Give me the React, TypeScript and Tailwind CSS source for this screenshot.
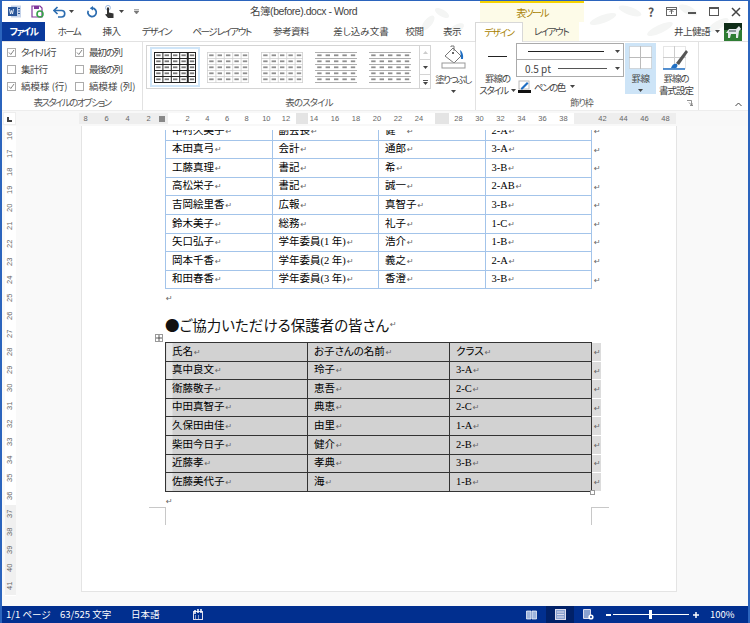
import React from "react";

const sans = "font-['Noto_Sans_CJK_JP','Liberation_Sans',sans-serif] [font-feature-settings:'palt']";

const topRows = [
  ["中村久美子", "副会長", "健一", "2-A"],
  ["本田真弓", "会計", "通郎", "3-A"],
  ["工藤真理", "書記", "希", "3-B"],
  ["高松栄子", "書記", "誠一", "2-AB"],
  ["吉岡絵里香", "広報", "真智子", "3-B"],
  ["鈴木美子", "総務", "礼子", "1-C"],
  ["矢口弘子", "学年委員(1 年)", "浩介", "1-B"],
  ["岡本千香", "学年委員(2 年)", "義之", "2-A"],
  ["和田春香", "学年委員(3 年)", "香澄", "3-B"],
];

const bottomRows = [
  ["氏名", "お子さんの名前", "クラス"],
  ["真中良文", "玲子", "3-A"],
  ["衛藤敬子", "恵吾", "2-C"],
  ["中田真智子", "典恵", "2-C"],
  ["久保田由佳", "由里", "1-A"],
  ["柴田今日子", "健介", "2-B"],
  ["近藤孝", "孝典", "3-B"],
  ["佐藤美代子", "海", "1-B"],
];

const leftNums = ["8", "6", "4", "2"];
const midA = ["2", "4", "6", "8", "10", "12"];
const midB = ["14", "16", "18", "20", "22", "24"];
const midC = ["28", "30", "32", "34", "36", "38"];
const rightNums = ["42", "44", "46", "48"];
const vNums = Array.from({ length: 26 }, (_, i) => 16 + i);

const Ret = () => <span className="font-['DejaVu_Sans',sans-serif] text-[8px] text-[#666] ml-[1px] leading-none">↵</span>;
const Caret = ({ className = "" }: { className?: string }) => (
  <svg width="5" height="3" viewBox="0 0 5 3" className={className}><path d="M0 0h5L2.5 3z" fill="#444" /></svg>
);

const Check = ({ label, on, track }: { label: string; on?: boolean; track: string }) => (
  <div className="flex items-center h-[17px] text-[9.5px] text-[#444] whitespace-nowrap">
    <div className="w-[9px] h-[9px] border border-[#ababab] bg-white mr-[5px] flex items-center justify-center shrink-0">
      {on && <svg width="7" height="7" viewBox="0 0 7 7"><path d="M1 3.5l1.8 2L6 1" fill="none" stroke="#777" strokeWidth="0.9" /></svg>}
    </div>
    <span className={track}>{label}</span>
  </div>
);

const Thumb = ({ kind }: { kind: "dark" | "light" | "lines" }) => {
  const line = kind === "dark" ? "#222" : kind === "light" ? "#cfcfcf" : "#9a9a9a";
  const xs = [0, 8.4, 16.8, 25.2, 33.6, 42];
  const ys = [0, 6, 12, 18, 24, 30];
  return (
    <svg width="42" height="31" viewBox="0 0 42 31" className="shrink-0">
      {ys.map((y) => <line key={y} x1="0" x2="42" y1={y + 0.5} y2={y + 0.5} stroke={line} strokeWidth={kind === "dark" ? 1 : 0.8} />)}
      {kind !== "lines" && xs.map((x) => <line key={x} x1={x + (x === 42 ? -0.5 : 0.5)} x2={x + (x === 42 ? -0.5 : 0.5)} y1="0" y2="31" stroke={line} strokeWidth={kind === "dark" ? 1 : 0.8} />)}
      {ys.slice(0, 5).map((y) => xs.slice(0, 5).map((x) => (
        <rect key={`${x}-${y}`} x={x + 2.2} y={y + 2.4} width="4.4" height="1.8" fill={kind === "dark" ? "#777" : "#8f8f8f"} />
      )))}
      {kind === "dark" && <line x1="33.6" x2="33.6" y1="0" y2="31" stroke="#222" strokeWidth="1.6" />}
    </svg>
  );
};

const Leaves = () => (
  <svg width="350" height="41" viewBox="0 0 350 41" className="absolute right-0 top-0 pointer-events-none">
    <g fill="#f4f5f4">
      <ellipse cx="30" cy="22" rx="9" ry="4" transform="rotate(-50 30 22)" />
      <ellipse cx="44" cy="12" rx="8" ry="3.5" transform="rotate(30 44 12)" />
      <ellipse cx="58" cy="28" rx="9" ry="4" transform="rotate(-30 58 28)" />
      <ellipse cx="205" cy="18" rx="14" ry="4" transform="rotate(-20 205 18)" />
      <ellipse cx="232" cy="10" rx="12" ry="4" transform="rotate(20 232 10)" />
      <ellipse cx="262" cy="28" rx="14" ry="4" transform="rotate(-25 262 28)" />
      <ellipse cx="290" cy="9" rx="10" ry="4" transform="rotate(25 290 9)" />
      <ellipse cx="320" cy="24" rx="12" ry="4" transform="rotate(-30 320 24)" />
    </g>
  </svg>
);

const App: React.FC = () => {
  return (
    <div className={`w-[750px] h-[623px] overflow-hidden flex flex-col bg-white border-x-2 border-t border-[#2b64bd] relative ${sans}`}>
      {/* title bar */}
      <div className="h-[21px] flex items-center relative shrink-0">
        <Leaves />
        <svg width="13" height="13" viewBox="0 0 13 13" className="ml-[6px]">
          <rect x="3" y="0.5" width="10" height="12" fill="#c5d3ea" />
          <rect x="0" y="2" width="9" height="9" fill="#2b579a" />
          <path d="M1.5 4l1 5 1-3.5 1 3.5 1-5" fill="none" stroke="#fff" strokeWidth="0.8" />
          <path d="M10 3.5h2M10 6h2M10 8.5h2" stroke="#2b579a" />
        </svg>
        <svg width="13" height="13" viewBox="0 0 13 13" className="ml-[10px]">
          <path d="M1 1h8l2 2v9H1z" fill="#fff" stroke="#80379b" strokeWidth="1.2" />
          <rect x="3" y="1" width="5" height="3" fill="#80379b" />
          <circle cx="9" cy="9" r="3" fill="none" stroke="#37a24a" strokeWidth="1.6" />
        </svg>
        <svg width="13" height="12" viewBox="0 0 13 12" className="ml-[9px]">
          <path d="M1.5 4.5h7a3.2 3.2 0 010 6.5H5" fill="none" stroke="#2b6cb0" strokeWidth="1.6" />
          <path d="M4.5 1L1 4.5 4.5 8" fill="none" stroke="#2b6cb0" strokeWidth="1.6" />
        </svg>
        <Caret className="ml-[3px]" />
        <svg width="12" height="12" viewBox="0 0 12 12" className="ml-[12px]">
          <path d="M6.5 2.2a4.2 4.2 0 11-4.3 2.6" fill="none" stroke="#2b6cb0" strokeWidth="1.7" />
          <path d="M7 0v4.5L3.8 2.2z" fill="#2b6cb0" />
        </svg>
        <svg width="11" height="14" viewBox="0 0 11 14" className="ml-[6px]">
          <circle cx="4" cy="2.8" r="2.4" fill="none" stroke="#9db8dd" />
          <path d="M3 2.5h2v5l4.5 1v4.5H4L1 9.5l2-.5z" fill="#333" />
        </svg>
        <Caret className="ml-[4px]" />
        <svg width="5" height="5" viewBox="0 0 5 5" className="ml-[10px]"><path d="M0 0.5h5M0 2l2.5 3L5 2z" stroke="#777" fill="#777" strokeWidth="0.6" /></svg>
        <div className="ml-[111px] w-[108px] text-[10.5px] tracking-[-0.45px] text-[#444] whitespace-nowrap font-['Liberation_Sans','Noto_Sans_CJK_JP',sans-serif] shrink-0">名簿(before).docx - Word</div>
        <div className="ml-[122px] w-[104px] h-[22px] -mt-[1px] bg-[#fdfbe8] border-t-[3px] border-[#f6d300] text-[10px] tracking-[-1.7px] text-[#a87f00] flex items-center justify-center relative shrink-0">表ツール</div>
        <div className="ml-[64px] text-[12px] font-bold text-[#555] relative">?</div>
        <svg width="11" height="9" viewBox="0 0 11 9" className="ml-[12px] relative"><rect x="0.5" y="0.5" width="10" height="8" fill="none" stroke="#666" /><path d="M5.5 7V3M3.5 5l2-2 2 2M0 2.5h11" stroke="#666" fill="none" /></svg>
        <div className="ml-[11px] w-[8px] h-[2px] bg-[#555] mt-[3px] relative" />
        <div className="ml-[13px] w-[10px] h-[9px] border border-[#555] border-t-2 relative" />
        <svg width="10" height="10" viewBox="0 0 10 10" className="ml-[12px] relative"><path d="M1 1l8 8M9 1l-8 8" stroke="#444" strokeWidth="1.5" /></svg>
      </div>
      {/* tabs */}
      <div className="h-[19px] flex items-center text-[9.5px] text-[#444] whitespace-nowrap shrink-0 relative">
        <div className="w-[43px] h-[19px] bg-[#0a3a9c] text-white flex items-center justify-center font-bold tracking-[-1.5px]">ファイル</div>
        <div className="w-[48px] text-center relative tracking-[-1.6px]">ホーム</div>
        <div className="w-[37px] text-center relative tracking-[-0.5px]">挿入</div>
        <div className="w-[53px] text-center relative tracking-[-1.4px]">デザイン</div>
        <div className="w-[77px] text-center relative tracking-[-1.5px]">ページ レイアウト</div>
        <div className="w-[62px] text-center relative tracking-[-0.5px]">参考資料</div>
        <div className="w-[78px] text-center relative">差し込み文書</div>
        <div className="w-[29px] text-center relative tracking-[-0.5px]">校閲</div>
        <div className="w-[46px] text-center relative tracking-[-0.5px]">表示</div>
        <div className="w-[48px] h-[20px] mt-[1px] bg-white border border-b-0 border-[#d8d8d8] text-[#a87f00] flex items-center justify-center relative z-10 tracking-[-1.4px]">デザイン</div>
        <div className="w-[56px] h-[19px] bg-[#fdfbe8] flex items-center justify-center relative tracking-[-1.4px]">レイアウト</div>
        <div className="ml-[95px] w-[36px] text-center relative tracking-[-0.5px]">井上健語</div>
        <Caret className="ml-[5px] relative" />
        <svg width="18" height="18" viewBox="0 0 18 18" className="ml-[4px] relative">
          <rect width="18" height="18" fill="#2f7d34" />
          <rect width="18" height="7" fill="#0f2d18" />
          <path d="M2 10l3-4h7l3-3 2 3-2 2-1 7h-2v-4H7l-1 4H4v-5z" fill="#e4e9ec" />
          <path d="M5 7h7v2H5z" fill="#8d979c" />
        </svg>
      </div>
      {/* ribbon */}
      <div className="h-[69px] flex border-t border-[#e2e2e2] border-b-0 shrink-0 text-[#444]">
        <div className="w-[141px] border-r border-[#e2e2e2] flex flex-col justify-between pl-[5px] pt-[2px] pb-[1px]">
          <div className="grid grid-cols-[68px_68px]">
            <Check label="タイトル行" on track="tracking-[-1.7px]" />
            <Check label="最初の列" on track="tracking-[-1.2px]" />
            <Check label="集計行" track="tracking-[-0.8px]" />
            <Check label="最後の列" track="tracking-[-1.2px]" />
            <Check label="縞模様 (行)" on track="tracking-[0px]" />
            <Check label="縞模様 (列)" track="tracking-[0px]" />
          </div>
          <div className="text-center text-[9.5px] tracking-[-1.6px] text-[#555] pr-[5px]">表スタイルのオプション</div>
        </div>
        <div className="w-[333px] border-r border-[#e2e2e2] flex flex-col justify-between pb-[1px]">
          <div className="flex pt-[3px]">
            <div className="ml-[3px] w-[285px] h-[44px] border border-[#d4d4d4] flex items-center overflow-hidden">
              <div className="ml-[3px] w-[50px] h-[40px] border-2 border-[#cfe5f8] flex items-center justify-center shrink-0"><Thumb kind="dark" /></div>
              <div className="ml-[7px] flex gap-[12px] shrink-0">
                <Thumb kind="light" />
                <Thumb kind="light" />
                <Thumb kind="lines" />
                <Thumb kind="lines" />
              </div>
              <div className="ml-auto w-[11px] h-[44px] border-l border-[#d4d4d4] flex flex-col text-[#999] shrink-0 bg-white">
                <div className="flex-1 flex items-center justify-center"><svg width="5" height="3" viewBox="0 0 5 3"><path d="M0 3h5L2.5 0z" fill="#ccc" /></svg></div>
                <div className="flex-1 flex items-center justify-center border-y border-[#d4d4d4]"><Caret /></div>
                <div className="flex-1 flex flex-col items-center justify-center gap-[1px]"><div className="w-[5px] h-[1px] bg-[#555]" /><Caret /></div>
              </div>
            </div>
            <div className="ml-[3px] w-[38px] flex flex-col items-center text-[9.5px] leading-[12px] whitespace-nowrap">
              <svg width="25" height="24" viewBox="0 0 25 24">
                <path d="M4 11l8-8 8 8-7 7z" fill="#fff" stroke="#777" />
                <path d="M10 2V1h3v5" fill="none" stroke="#777" />
                <circle cx="12" cy="8" r="1" fill="#333" />
                <path d="M19 5c3 2 3.5 6 3 9h-2c0-3-.5-6-1-9z" fill="#1f6fc4" />
                <rect x="1" y="18" width="23" height="5" fill="#fff" stroke="#999" />
              </svg>
              <div className="mt-[4px] tracking-[-1.6px]">塗りつぶし</div>
              <Caret className="mt-[5px]" />
            </div>
          </div>
          <div className="text-center text-[9.5px] tracking-[-0.9px] text-[#555]">表のスタイル</div>
        </div>
        <div className="w-[223px] border-r border-[#e2e2e2] flex flex-col justify-between pb-[1px]">
          <div className="flex pt-[1px]">
            <div className="ml-[3px] w-[37px] flex flex-col items-center text-[9.5px] leading-[12px] whitespace-nowrap">
              <div className="mt-[13px] w-[19px] h-[1px] bg-[#222]" />
              <div className="mt-[15px] tracking-[-1px]">罫線の</div>
              <div className="flex items-center tracking-[-1.4px]">スタイル<Caret className="ml-[3px]" /></div>
            </div>
            <div className="w-[108px] flex flex-col">
              <div className="h-[17px] border border-[#ababab] flex items-center pl-[11px] pr-[3px] bg-white">
                <div className="w-[76px] h-[1px] bg-[#222]" />
                <Caret className="ml-auto" />
              </div>
              <div className="h-[17px] border border-t-0 border-[#ababab] flex items-center pl-[8px] pr-[3px] bg-white text-[10px] whitespace-nowrap">
                0.5 pt
                <div className="ml-[7px] w-[49px] h-[1px] bg-[#555]" />
                <Caret className="ml-auto" />
              </div>
              <div className="flex items-center mt-[3px] text-[9.5px] leading-[12px] whitespace-nowrap">
                <svg width="13" height="13" viewBox="0 0 13 13" className="ml-[2px] mr-[3px]">
                  <rect x="1" y="1" width="10" height="8" fill="#fff" stroke="#bbb" />
                  <path d="M3 8l6-6 1.5 1.5-6 6H3z" fill="#1f6fc4" />
                  <rect x="0" y="10" width="13" height="3" fill="#111" />
                </svg>
                <span className="tracking-[-1.5px]">ペンの色</span><Caret className="ml-[5px]" />
              </div>
            </div>
            <div className="ml-[1px] w-[31px] h-[51px] bg-[#cde4f7] flex flex-col items-center text-[9.5px] leading-[12px]">
              <svg width="23" height="23" viewBox="0 0 23 23" className="mt-[3px]">
                <rect x="0.5" y="0.5" width="22" height="22" fill="#fff" stroke="#bbb" strokeDasharray="1 1" />
                <path d="M11.5 0v23M0 11.5h23" stroke="#bbb" />
              </svg>
              <div className="mt-[3px] tracking-[-0.5px]">罫線</div>
              <Caret className="mt-[5px]" />
            </div>
            <div className="ml-[1px] w-[38px] flex flex-col items-center text-[9.5px] leading-[12px] whitespace-nowrap">
              <svg width="26" height="24" viewBox="0 0 26 24" className="mt-[3px]">
                <rect x="0.5" y="0.5" width="22" height="22" fill="#fff" stroke="#ccc" strokeDasharray="1 1" />
                <path d="M11.5 0v23M0 11.5h23" stroke="#ccc" />
                <path d="M0 23h22" stroke="#1f6fc4" strokeWidth="1.5" />
                <path d="M8 22c1-4 4-5 6-4 1 1 0 4-1 4z" fill="#1f6fc4" />
                <path d="M13 17l10-13 2 2-9 13z" fill="#555" />
              </svg>
              <div className="mt-[2px] tracking-[-1px]">罫線の</div>
              <div className="tracking-[-1px]">書式設定</div>
            </div>
          </div>
          <div className="flex text-[9px] text-[#555] items-center">
            <div className="flex-1 text-center tracking-[-1px]">飾り枠</div>
            <svg width="6" height="6" viewBox="0 0 6 6" className="mr-[5px]"><path d="M0 0.5h4.5V5M2 2.5l3 3M3 5.5h3V3" fill="none" stroke="#777" strokeWidth="0.8" /></svg>
          </div>
        </div>
        <div className="flex-1 flex justify-end items-end pr-[6px] pb-[3px]">
          <svg width="7" height="5" viewBox="0 0 7 5"><path d="M0.5 4l3-3 3 3" fill="none" stroke="#444" /></svg>
        </div>
      </div>
      {/* horizontal ruler */}
      <div className="h-[16px] bg-[#f8f8f8] border-t border-[#ededed] flex items-center shrink-0 text-[7.5px] text-[#666]">
        <div className="ml-[1px] w-[13px] h-[13px] bg-white border border-[#eee] flex items-end justify-center pb-[2px]">
          <div className="w-[5px] h-[5px] border-l-2 border-b-2 border-[#444]" />
        </div>
        <div className="ml-[63px] w-[597px] h-[11px] flex font-['Liberation_Sans',sans-serif]">
          <div className="w-[91px] bg-[#eeeeee]">
            <div className="flex -ml-[4px]">
              {leftNums.map((n) => <div key={n} className="w-[21px] text-center">{n}</div>)}
              <div className="w-[6px] h-[6px] mt-[3px] bg-[#888]" />
            </div>
          </div>
          <div className="w-[128px] bg-white flex pl-[10px]">
            {midA.map((n) => <div key={n} className="w-[21px] text-center">{n}</div>)}
          </div>
          <div className="w-[13px] bg-[#e4e4e4]" />
          <div className="w-[130px] bg-white">
            <div className="flex -ml-[5px]">
              {midB.map((n) => <div key={n} className="w-[21px] text-center">{n}</div>)}
            </div>
          </div>
          <div className="w-[14px] bg-[#e4e4e4]" />
          <div className="w-[128px] bg-white">
            <div className="flex -ml-[1px]">
              {midC.map((n) => <div key={n} className="w-[21px] text-center">{n}</div>)}
            </div>
          </div>
          <div className="flex-1 bg-[#eeeeee] flex pl-[18px]">
            {rightNums.map((n) => <div key={n} className="w-[21px] text-center">{n}</div>)}
          </div>
        </div>
      </div>
      {/* document */}
      <div className="flex-1 min-h-0 flex bg-[#f9f9f9] overflow-hidden">
        <div className="ml-[3px] w-[11px] h-[470px] bg-white flex flex-col pt-[1px] text-[7.5px] text-[#666] font-['Liberation_Sans',sans-serif] shrink-0">
          {vNums.map((n) => (
            <div key={n} className={`h-[18px] shrink-0 flex items-center justify-center ${n > 36 ? "bg-[#f0f0f0]" : ""}`}>
              <div className="-rotate-90 leading-none">{n}</div>
            </div>
          ))}
        </div>
        <div className="ml-[65px] w-[596px] h-[466px] bg-white border-x border-b border-[#e4e4e4] shrink-0 pl-[83px] pt-[4px] relative">
          <div className="h-[159px] overflow-hidden">
            <table className="-mt-[9px] table-fixed border-collapse font-['Liberation_Serif','Noto_Sans_CJK_JP',serif] text-[10.5px] text-[#000]">
              <tbody>
                {topRows.map((r) => (
                  <tr key={r[0]} className="h-[18.6px]">
                    {r.map((c, i) => (
                      <td key={i} className="p-0 pl-[6px] border border-[#a3c4ea] leading-none whitespace-nowrap w-[106.5px]">{c}<Ret /></td>
                    ))}
                    <td className="p-0 pl-[1px] w-[8px]"><Ret /></td>
                  </tr>
                ))}
              </tbody>
            </table>
          </div>
          <div className="h-[20px] flex items-center"><Ret /></div>
          <div className="mt-[7px] h-[18px] text-[14.5px] leading-[18px] text-[#111] whitespace-nowrap font-['Noto_Sans_CJK_JP',sans-serif] flex items-center">●ご協力いただける保護者の皆さん<Ret /></div>
          <div className="mt-[8px] relative">
            <div className="absolute -left-[10px] -top-[8px] w-[8px] h-[8px] border border-[#999] bg-white flex items-center justify-center">
              <svg width="6" height="6" viewBox="0 0 6 6"><path d="M3 0v6M0 3h6" stroke="#333" strokeWidth="0.8" /></svg>
            </div>
            <table className="table-fixed border-collapse font-['Liberation_Serif','Noto_Sans_CJK_JP',serif] text-[10.5px] text-[#000]">
              <tbody>
                {bottomRows.map((r) => (
                  <tr key={r[0]} className="h-[18.6px]">
                    {r.map((c, i) => (
                      <td key={i} className={`p-0 pl-[6px] border-[1.5px] border-[#333] leading-none whitespace-nowrap w-[142px] ${i === 0 ? "bg-[linear-gradient(to_right,#e6e6e6_6px,#d2d2d2_6px)]" : "bg-[#d2d2d2]"}`}>{c}<Ret /></td>
                    ))}
                    <td className="p-0 pl-[1px] w-[6px] bg-[#dcdcdc] border-y border-[#fff]"><Ret /></td>
                  </tr>
                ))}
              </tbody>
            </table>
            <div className="absolute left-[425px] bottom-[-3px] w-[5px] h-[5px] border border-[#999] bg-white" />
          </div>
          <div className="h-[20px] flex items-center"><Ret /></div>
          <div className="flex h-[18px] -mt-[5px] -ml-[16px] w-[460px] justify-between">
            <div className="w-[17px] border-t border-r border-[#c8c8c8]" />
            <div className="w-[18px] border-t border-l border-[#c8c8c8]" />
          </div>
        </div>
      </div>
      {/* status bar */}
      <div className="h-[17px] bg-[#012f8f] text-[#fff] text-[9.5px] flex items-center shrink-0 whitespace-nowrap">
        <div className="ml-[4px] w-[54px]">1/1 ページ</div>
        <div className="w-[71px]">63/525 文字</div>
        <div className="w-[62px]">日本語</div>
        <svg width="10" height="11" viewBox="0 0 10 11">
          <rect x="0.5" y="2.5" width="9" height="8" fill="none" stroke="#dde" />
          <path d="M2 1v4M8 0v4M5 0v4" stroke="#fff" strokeWidth="1.5" />
          <path d="M2 7h1M5 7h1M2 9h1M5 9h1" stroke="#fff" />
        </svg>
        <svg width="11" height="10" viewBox="0 0 11 10" className="ml-[323px]">
          <path d="M0.5 1h4.5v8H0.5zM6 1h4.5v8H6z" fill="#9db4dd" stroke="#fff" strokeWidth="0.7" />
        </svg>
        <div className="ml-[9px] w-[28px] h-[17px] bg-[#012168] flex items-center justify-center">
          <svg width="11" height="11" viewBox="0 0 11 11"><rect x="0.5" y="0.5" width="10" height="10" fill="#8aa2d0" stroke="#dde" /><path d="M2 3h7M2 5.5h7M2 8h7" stroke="#dde" /></svg>
        </div>
        <svg width="11" height="11" viewBox="0 0 11 11" className="ml-[9px]">
          <path d="M0.5 0.5h7v9h-7z" fill="#8aa2d0" stroke="#dde" />
          <circle cx="8" cy="8" r="2.6" fill="#fff" />
          <circle cx="8" cy="8" r="1" fill="#012f8f" />
        </svg>
        <div className="ml-[12px] w-[5px] h-[2px] bg-white" />
        <div className="ml-[2px] w-[76px] h-[1px] bg-white relative">
          <div className="absolute left-[36px] -top-[4px] w-[3px] h-[9px] bg-white" />
        </div>
        <svg width="6" height="6" viewBox="0 0 6 6" className="ml-[4px]"><path d="M3 0v6M0 3h6" stroke="#fff" strokeWidth="1.5" /></svg>
        <div className="ml-[11px] text-[9.5px]">100%</div>
      </div>
    </div>
  );
};

export default App;
